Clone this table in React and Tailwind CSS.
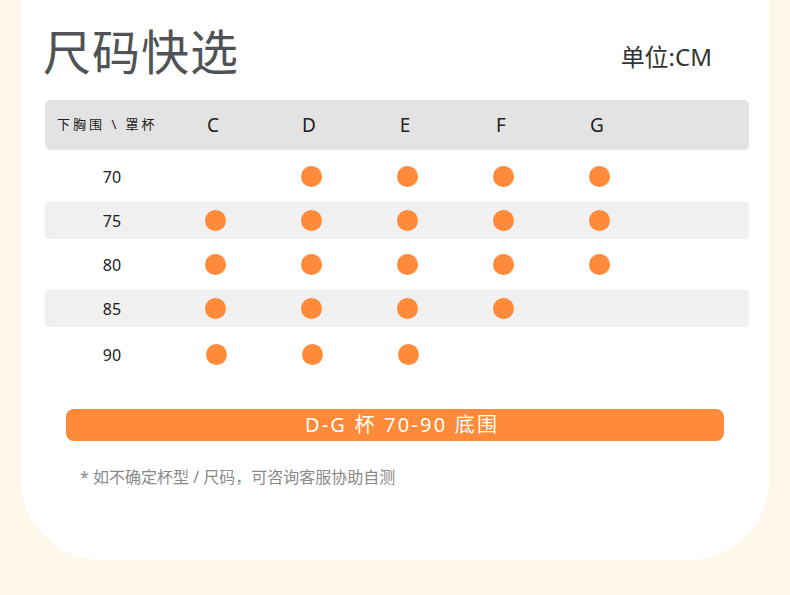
import React from "react";

const cups = ["C", "D", "E", "F", "G"];
const rows = [
  { band: "70", has: [false, true, true, true, true], shade: false },
  { band: "75", has: [true, true, true, true, true], shade: true },
  { band: "80", has: [true, true, true, true, true], shade: false },
  { band: "85", has: [true, true, true, true, false], shade: true },
  { band: "90", has: [true, true, true, false, false], shade: false },
];

const font = { fontFamily: '"Noto Sans", "Noto Sans CJK SC", sans-serif' };

const Dot = () => <div className="w-[21px] h-[21px] rounded-full bg-[#ff8a3a]" />;

export default function App() {
  return (
    <div className="w-[790px] h-[595px] bg-[#fef7ec] overflow-hidden" style={font}>
      <div className="mx-[21px] h-[560px] bg-white rounded-b-[80px] pt-[22px]">
        <div className="flex items-start justify-between pl-[22px] pr-[57px]">
          <h1 className="text-[48px] leading-[60px] text-[#505355] tracking-[1px]">尺码快选</h1>
          <div className="text-[24px] leading-[30px] text-[#333] mt-[20px]">单位:CM</div>
        </div>

        <div className="ml-[24px] mr-[20px] mt-[18px]">
          <div className="grid grid-cols-[122px_repeat(5,96px)_1fr] items-center h-[50px] bg-[#e3e3e3] rounded-[5px]">
            <div className="pl-[12px] text-[13px] tracking-[3px] text-[#222] whitespace-nowrap">下胸围 \ 罩杯</div>
            {cups.map((c) => (
              <div key={c} className="text-center text-[19px] text-[#222] pr-[4px]">{c}</div>
            ))}
            <div />
          </div>

          <div className="mt-[8px] flex flex-col gap-[7px]">
            {rows.map((r) => (
              <div
                key={r.band}
                className={`grid grid-cols-[122px_repeat(5,96px)_1fr] items-center h-[37px] rounded-[4px] ${r.shade ? "bg-[#f0f0f0]" : ""}`}
              >
                <div className={`pl-[12px] text-center text-[16px] text-[#222] ${r.band === "90" ? "pt-[4px]" : ""}`}>{r.band}</div>
                {r.has.map((h, i) => (
                  <div key={i} className={`flex justify-center ${r.band === "90" ? "pl-[3px] pt-[4px]" : ""}`}>{h ? <Dot /> : null}</div>
                ))}
                <div />
              </div>
            ))}
          </div>
        </div>

        <div className="mx-[45px] mt-[38px] h-[32px] rounded-[8px] bg-[#ff8a3a] flex items-center justify-center pl-[14px] text-white text-[20px] tracking-[2.2px]">
          D-G 杯 70-90 底围
        </div>

        <div className="ml-[59px] mt-[24px] text-[16px] text-[#8a8a8a]">* 如不确定杯型 / 尺码，可咨询客服协助自测</div>
      </div>
    </div>
  );
}
